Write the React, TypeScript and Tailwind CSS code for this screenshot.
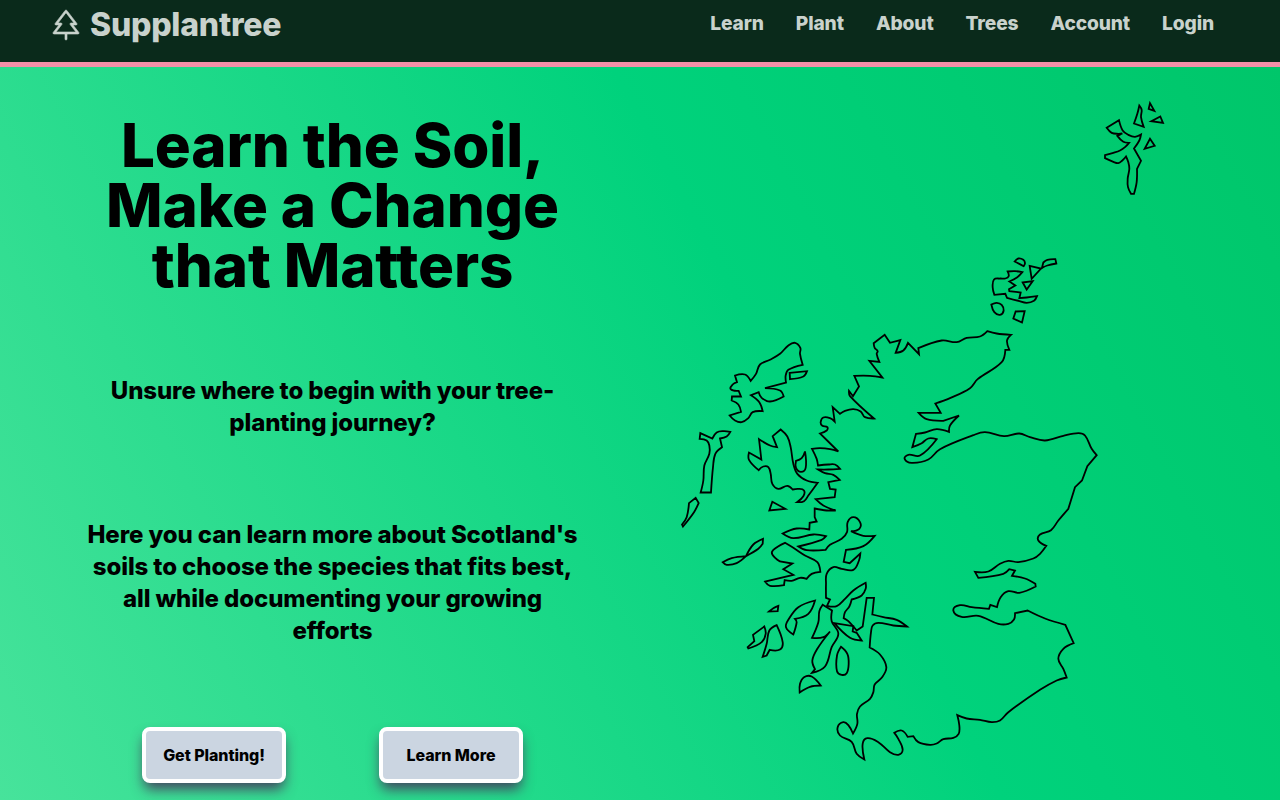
import { PiTreeEvergreen } from "react-icons/pi";

type Point = { x: number; y: number; smooth: boolean };

/**
 * Outline notation: "x,y" is a sharp corner, "x,y~" a smooth one,
 * and "@x,y" moves the origin that later points are measured from.
 * Points are in thirds of a map unit.
 */
function outline(source: string): string {
  const points: Point[] = [];
  let ox = 0;
  let oy = 0;
  for (const token of source.trim().split(/\s+/)) {
    const [x, y] = token.replace(/[@~]/g, "").split(",").map(Number);
    if (token.startsWith("@")) {
      ox = x;
      oy = y;
    } else {
      points.push({ x: ox + x / 3, y: oy + y / 3, smooth: token.endsWith("~") });
    }
  }
  const n = points.length;
  const handle = (i: number, length: number, sign: number) => {
    const p = points[i];
    if (!p.smooth) return p;
    const a = points[(i + n - 1) % n];
    const b = points[(i + 1) % n];
    const size = Math.hypot(b.x - a.x, b.y - a.y) || 1;
    const k = (sign * length * 0.36) / size;
    return { x: p.x + (b.x - a.x) * k, y: p.y + (b.y - a.y) * k };
  };
  let d = `M${points[0].x.toFixed(2)} ${points[0].y.toFixed(2)}`;
  for (let i = 0; i < n; i++) {
    const j = (i + 1) % n;
    const length = Math.hypot(points[j].x - points[i].x, points[j].y - points[i].y);
    const c1 = handle(i, length, 1);
    const c2 = handle(j, length, -1);
    d += `C${[c1.x, c1.y, c2.x, c2.y, points[j].x, points[j].y].map((v) => v.toFixed(2)).join(" ")}`;
  }
  return d + "Z";
}

const mainland = `
@840,310 102,324 75,320~ 62,303~ 40,296~ 15,301~
@670,330 510,250 488,230 494,273 480,263~ 460,261~ 452,275~ 457,286~ 472,290~ 470,300~ 450,309 505,363 480,356~ 450,353~ 426,355 440,385~ 444,405 475,402~ 495,402~ 510,415 475,417~ 444,417 465,428~ 490,433~ 509,448 475,455 480,475 497,477 494,500 437,506 460,525~ 497,540 470,540~ 434,534 434,560 440,573 419,577
@710,480 298,147 260,144~ 218,159 250,173~ 310,162~ 348,167 335,178~ 265,198 290,209~ 347,208 360,193~ 395,175~ 411,155~ 413,125~ 430,110~ 450,125~ 448,145~ 423,152 460,166~ 494,166 460,197~ 408,208 401,244 419,248 451,219 447,240~ 430,268~ 395,265~ 370,260~ 350,280~ 348,310~ 348,352 360,357 351,376 380,377~ 405,355~ 430,330~ 467,307 467,325~ 455,345~
@730,580 365,57 358,78~ 345,95~ 341,113 355,122~ 380,150 398,138 410,52 432,52 427,102 460,110~ 500,118~ 531,138 490,135~ 445,127~ 428,135~ 423,155~ 419,201 450,222~ 469,260~ 455,292~ 434,312~ 430,335~ 420,355~ 390,378~ 381,400~ 382,430~ 369,459 355,434~ 340,425~ 323,440~ 330,465~ 365,484~ 380,520~ 403,537 398,490~ 412,473~ 445,485~ 480,515~ 505,523~ 518,508~ 505,475~ 493,457 515,450~ 533,469 550,467 565,485~
@930,420 0,973~ 20,969~ 40,956~ 70,952~ 86,940~ 88,915~ 82,884 110,894~ 150,898~ 185,905~ 210,900~ 235,875~ 330,808~ 380,780~ 410,771 400,745~ 385,715~ 400,685~ 431,668 406,613 345,594~ 293,570 255,578 252,597~ 235,610~ 205,610~ 145,586~ 95,589~ 70,570~ 90,554~ 125,560~ 177,565 181,553 201,560 212,530~ 235,512~ 268,517~ 317,498 316,490 285,474~ 246,466 255,450 238,446 220,460~ 145,472 135,454 175,453~ 210,430~ 235,421~ 265,425~ 310,414~ 330,400~ 349,376 325,360~ 330,342~ 363,329~ 385,300~ 415,265 435,200 456,180 472,137 500,104 485,85~ 465,45~ 445,38~ 400,46~ 345,60~ 300,50~ 268,39~ 222,47~ 165,35~ 130,44~ 30,86~
@840,310 265,447~ 215,457~ 194,445~ 205,433~ 240,435~ 290,386 265,384~ 245,398~ 217,410 228,370 255,366~ 290,356~ 327,364 330,345~ 357,315 310,331 260,326~ 236,307 302,307 286,279 330,263~ 390,233~ 413,206~ 485,155~ 496,118 508,118 501,90~ 513,73 470,69~ 442,62 420,78~ 380,82~ 350,95~ 305,90~ 235,113 237,131 204,97 190,120~ 167,127 181,89 150,97 134,73 101,98 104,112~ 113,122~ 110,130~ 118,154 88,151 127,201 90,196~ 43,196 57,228 39,257 27,241 30,257~`;

const shetland = [
  "@1080,90 80,112 117,89 128,120~ 145,133~ 165,139~ 183,132 178,150~ 162,174 183,211 171,235 170,275~ 162,310 153,310 144,290~ 143,265~ 148,235~ 145,215~ 138,198 127,210~ 115,218~ 100,214~ 75,203 75,194 100,187~ 120,180~ 135,170~ 147,157 130,154~ 112,136 127,129 115,130~ 95,127~",
  "@1080,90 178,45 185,58~ 183,80~ 191,109 162,99 172,70~",
  "@1080,90 210,38 223,61 206,55",
  "@1080,90 241,78 249,97 214,92",
  "@1080,90 210,145 224,166 194,175",
];

const orkney = [
  "@960,240 164,63 175,54~ 190,58~ 195,68~ 191,77 178,70~",
  "@960,240 246,82 250,66 262,58~ 286,56 289,69 262,75~",
  "@960,240 209,76 243,84 215,115",
  "@960,240 188,126 218,122 200,147",
  "@960,240 143,93 165,92~ 187,95 172,110~ 148,123 166,135 147,146 148,152 182,156 178,173 200,171~ 231,167 222,181~ 200,187~ 175,181~ 141,172 136,160 103,163 98,140~ 102,117~ 120,114~ 136,114~ 146,107~",
  "@960,240 94,192 110,187~ 125,193~ 131,210~ 120,223~ 103,215~",
  "@960,240 167,213 194,212 186,246 160,234",
];

const hebrides = [
  "@670,330 398,103 390,70~ 391,52~ 375,37~ 355,45~ 330,70~ 300,88~ 270,102~ 258,130~ 242,151 225,132~ 195,135 201,155 188,162~ 182,176~ 206,181 213,198 186,198 185,210 205,222~ 213,244 179,255 195,270~ 215,275~ 235,263~ 248,245~ 278,242 268,215~ 243,194 266,185 275,202~ 300,213~ 341,198 330,180~ 285,173 348,156 347,135~ 355,118~",
  "@670,330 359,127 411,122 400,138~ 360,146",
  "@670,330 91,308 127,324 140,306~ 160,302~ 181,304 170,318~ 150,324 156,350 136,370~ 129,410~ 123,486 92,486 100,450~ 103,405~ 118,370~ 118,345~ 110,330~ 89,325",
  "@670,330 77,502 86,518 72,545~ 39,588 36,582 50,560~ 57,518",
  "@670,330 332,297 308,317 321,350 300,345~ 267,326 274,387 237,366 237,388~ 266,419 280,408~ 295,410~ 302,430~ 307,460~ 325,475~ 352,466~ 368,477 385,475~ 402,480~ 400,497~ 381,515 402,512~ 415,495~ 443,457 410,450~ 382,430~ 370,400~ 362,350~ 352,318~",
  "@670,330 405,363 407,412~ 393,424~ 378,412~ 378,391 395,383~",
  "@670,330 307,514 346,535 298,540",
  "@710,480 225,187 190,208~ 187,222~ 210,243 247,249 220,266 250,283 165,303 180,316~ 222,314 224,299 245,301~ 270,292~ 290,295 305,280~ 331,274 322,245~ 285,225~ 250,202~",
  "@710,480 159,175 130,192~ 108,227 80,248~ 50,253~ 38,245 65,233~ 108,227 145,205~ 158,190",
  "@710,480 205,376 203,392 177,393 190,383~",
];

const southernIsles = [
  "@730,580 53,200 73,182 69,163 103,138 107,160~ 95,185~ 55,204",
  "@730,580 140,134 158,185~ 150,207~ 119,208 110,225 98,229 110,190~ 118,150~",
  "@730,580 255,60 235,100~ 195,115 200,125~ 190,162 168,140~ 175,118~ 205,80~",
  "@730,580 278,73 306,90 305,122~ 325,160~ 305,200~ 285,258~ 246,277 255,266 247,240~ 262,205~ 300,153 280,170~ 246,172 265,125~ 268,92~",
  "@730,580 313,128 370,137 368,153 380,157 395,180 360,172~",
  "@730,580 333,199 352,220~ 356,250~ 350,278~ 335,283~ 321,272~ 321,225~",
  "@730,580 209,336 210,310~ 222,290~ 245,288~ 272,315 240,319~",
];

const coastlines = [mainland, ...shetland, ...orkney, ...hebrides, ...southernIsles].map(outline);

const links = ["Learn", "Plant", "About", "Trees", "Account", "Login"];

function Header() {
  return (
    <header className="flex h-[67px] shrink-0 items-start justify-between border-b-[5px] border-[#f48fa8] bg-[#0a2a1b] pr-[66px] pl-[50px] text-[#c9d2cc]">
      <a href="#" className="flex items-center gap-2 pt-[5px]">
        <PiTreeEvergreen className="size-8 stroke-current" strokeWidth={5} />
        <span className="text-[32px] leading-10 font-extrabold tracking-[-0.007em]">Supplantree</span>
      </a>
      <nav className="flex gap-8 pt-2 text-[19.2px] leading-[30px] font-extrabold tracking-[-0.007em]">
        {links.map((link) => (
          <a key={link} href="#">
            {link}
          </a>
        ))}
      </nav>
    </header>
  );
}

function ActionButton({ label }: { label: string }) {
  return (
    <button className="h-14 w-36 rounded-lg border-4 border-white bg-[#cbd5e1] font-extrabold tracking-[-0.004em] shadow-[0_8px_13px_-2px_rgba(70,50,90,0.9)]">
      {label}
    </button>
  );
}

function ScotlandMap() {
  return (
    <svg viewBox="665 66.5 615 733" className="h-[733px] w-[615px]" fill="none" stroke="black" strokeWidth="1.8">
      {coastlines.map((d, i) => (
        <path key={i} d={d} />
      ))}
    </svg>
  );
}

export default function App() {
  return (
    <div className="flex h-[800px] w-[1280px] flex-col overflow-hidden font-['Inter',sans-serif] text-black">
      <Header />
      <main className="flex flex-1 bg-[linear-gradient(62deg,#47e39b_0%,#00d27c_60%,#00c66a_100%)]">
        <section className="flex w-[665px] flex-col items-center pt-12 text-center font-extrabold tracking-[-0.007em]">
          <h1 className="w-[490px] text-6xl leading-[60px]">Learn the Soil, Make a Change that Matters</h1>
          <p className="mt-20 w-[494px] text-2xl">Unsure where to begin with your tree-planting journey?</p>
          <p className="mt-20 w-[494px] text-2xl">
            Here you can learn more about Scotland's soils to choose the species that fits best,{" "}
            <br />
            all while documenting your growing efforts
          </p>
          <div className="mt-20 flex gap-[93px]">
            <ActionButton label="Get Planting!" />
            <ActionButton label="Learn More" />
          </div>
        </section>
        <ScotlandMap />
      </main>
    </div>
  );
}
